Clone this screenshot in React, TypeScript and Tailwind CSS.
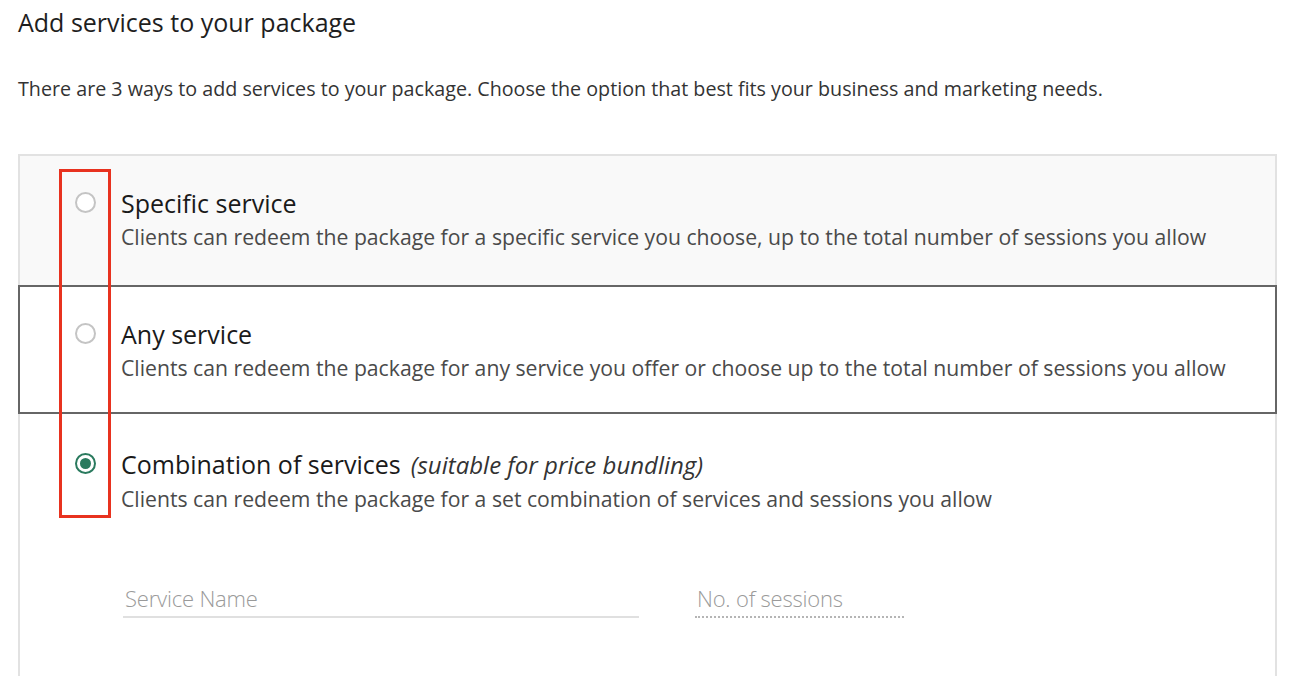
import React, { useState } from "react";

type Option = {
  id: string;
  title: string;
  note?: string;
  desc: string;
};

const options: Option[] = [
  {
    id: "specific",
    title: "Specific service",
    desc: "Clients can redeem the package for a specific service you choose, up to the total number of sessions you allow",
  },
  {
    id: "any",
    title: "Any service",
    desc: "Clients can redeem the package for any service you offer or choose up to the total number of sessions you allow",
  },
  {
    id: "combo",
    title: "Combination of services",
    note: "(suitable for price bundling)",
    desc: "Clients can redeem the package for a set combination of services and sessions you allow",
  },
];

function Radio({ checked }: { checked: boolean }) {
  return (
    <span
      className={`mt-[5px] flex h-[21px] w-[21px] shrink-0 items-center justify-center rounded-full border-2 bg-white ${
        checked ? "border-[#2a7a5e]" : "border-[#c4c4c4]"
      }`}
    >
      {checked && <span className="h-[11px] w-[11px] rounded-full bg-[#2a7a5e]" />}
    </span>
  );
}

export default function App() {
  const [selected, setSelected] = useState("combo");
  const hovered = "any";

  return (
    <div className="min-h-[676px] bg-white pl-[18px] pr-[15px] text-[#222]" style={{ fontFamily: '"Open Sans", sans-serif' }}>
      <h1 className="pt-[6px] text-[25px] leading-[32px] text-[#1e1e1e]">Add services to your package</h1>
      <p className="mt-[37px] text-[19.7px] leading-[28px] text-[#333]">
        There are 3 ways to add services to your package. Choose the option that best fits your business and marketing
        needs.
      </p>

      <div className="relative mt-[51px]">
        {options.map((opt, i) => {
          const isHover = opt.id === hovered;
          const isChecked = opt.id === selected;
          const border = isHover
            ? "border-2 border-[#666]"
            : i === 0
            ? "border-2 border-b-0 border-[#e2e2e2]"
            : "border-2 border-t-0 border-b-0 border-[#e2e2e2]";
          const bg = i === 0 ? "bg-[#f9f9f9]" : "bg-white";
          const pad = i === 0 ? "pt-[31px] pb-[34px]" : i === 1 ? "pt-[31px] pb-[30px]" : "pt-[34px] pb-0";
          return (
            <div
              key={opt.id}
              onClick={() => setSelected(opt.id)}
              className={`${border} ${bg} ${pad} cursor-pointer pl-[55px]`}
            >
              <div className="flex gap-[25px]">
                <Radio checked={isChecked} />
                <div>
                  <div className="text-[25px] leading-[32px] text-[#1a1a1a]">
                    {opt.title}
                    {opt.note && <span className="ml-[10px] text-[24px] italic text-[#333]">{opt.note}</span>}
                  </div>
                  <div className="mt-[4px] text-[21.2px] leading-[28px] text-[#4a4a4a]">{opt.desc}</div>
                </div>
              </div>
              {opt.id === "combo" && (
                <div className="ml-[48px] mt-[69px] flex h-[120px] gap-[56px]">
                  <div className="h-[36px] w-[516px] border-b-2 border-[#e0e0e0]">
                    <input
                      placeholder="Service Name"
                      className="w-full bg-transparent pl-[2px] text-[22px] font-light tracking-[-0.2px] text-[#333] outline-none placeholder:text-[#9a9a9a]"
                    />
                  </div>
                  <div className="h-[36px] w-[209px] border-b-2 border-dotted border-[#b5b5b5]">
                    <input
                      placeholder="No. of sessions"
                      className="w-full bg-transparent pl-[2px] text-[22px] font-light tracking-[-0.2px] text-[#333] outline-none placeholder:text-[#9a9a9a]"
                    />
                  </div>
                </div>
              )}
            </div>
          );
        })}

        {/* annotation highlight */}
        <div className="pointer-events-none absolute left-[41px] top-[15px] h-[349px] w-[52px] border-[3px] border-[#e8321f]" />
      </div>
    </div>
  );
}
